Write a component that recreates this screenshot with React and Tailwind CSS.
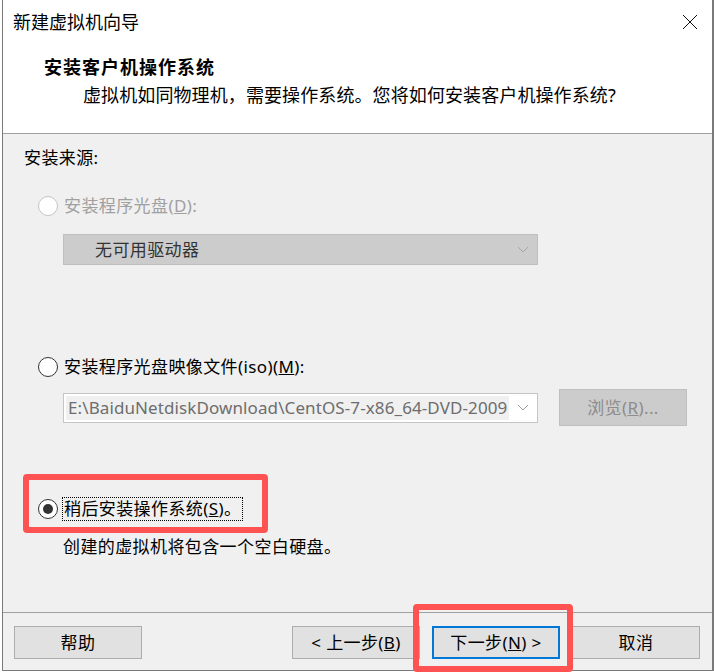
import React from 'react';

const font = "font-['Noto_Sans','Noto_Sans_CJK_SC',sans-serif]";

function Radio({ state }) {
    // state: 'disabled' | 'off' | 'on'
    const ring = state === 'disabled' ? 'border-[#c4c4c4]' : 'border-[#333333]';
    return (
        <span className={`w-[20px] h-[20px] rounded-full border bg-white flex items-center justify-center shrink-0 ${ring}`}>
            {state === 'on' && <span className="w-[10px] h-[10px] rounded-full bg-[#333333]" />}
        </span>
    );
}

function Chevron({ color }) {
    return (
        <svg width="12" height="7" viewBox="0 0 12 7" className="shrink-0">
            <polyline points="1,1 6,6 11,1" fill="none" stroke={color} strokeWidth="1" />
        </svg>
    );
}

function Btn({ children, primary }) {
    return (
        <div
            className={`w-[128px] h-[33px] flex items-center justify-center bg-[#e1e1e1] text-[17px] tracking-[0.4px] text-black ${
                primary ? 'border-2 border-[#0078d7]' : 'border border-[#adadad]'
            }`}
        >
            {children}
        </div>
    );
}

export default function App() {
    return (
        <div className={`relative w-[714px] h-[672px] bg-white overflow-hidden ${font}`}>
            <div className="ml-[2px] w-[712px] h-[671px] flex flex-col border-l border-r-2 border-b border-[#7a7a7a]">
                {/* header */}
                <div className="h-[134px] bg-white border-b border-[#a0a0a0] shrink-0">
                    <div className="h-[44px] flex items-center justify-between pl-[10px] pr-[14px]">
                        <span className="text-[18px] leading-[24px] text-black">新建虚拟机向导</span>
                        <svg width="16" height="16" viewBox="0 0 16 16">
                            <line x1="1" y1="1" x2="15" y2="15" stroke="#111" strokeWidth="1" />
                            <line x1="15" y1="1" x2="1" y2="15" stroke="#111" strokeWidth="1" />
                        </svg>
                    </div>
                    <div className="mt-[11px] pl-[41px] text-[18px] leading-[24px] font-bold text-black tracking-[1px]">
                        安装客户机操作系统
                    </div>
                    <div className="mt-[4px] pl-[80px] text-[18px] leading-[24px] text-black tracking-[0.1px]">
                        虚拟机如同物理机，需要操作系统。您将如何安装客户机操作系统?
                    </div>
                </div>

                {/* body */}
                <div className="flex-1 bg-[#f0f0f0] pl-[21px] pt-[12px] text-[17px] leading-[24px] tracking-[0.4px]">
                    <div className="text-black">安装来源:</div>

                    <div className="mt-[24px] ml-[14px] flex items-center gap-[6px] text-[#a0a0a0]">
                        <Radio state="disabled" />
                        <span>安装程序光盘(<span className="underline">D</span>):</span>
                    </div>
                    <div className="mt-[16px] ml-[39px] w-[475px] h-[31px] bg-[#cccccc] border border-[#bfbfbf] flex items-center justify-between pl-[31px] pr-[8px]">
                        <span className="text-[#333333]">无可用驱动器</span>
                        <Chevron color="#a6a6a6" />
                    </div>

                    <div className="mt-[90px] ml-[14px] flex items-center gap-[6px] text-black">
                        <Radio state="off" />
                        <span>安装程序光盘映像文件(iso)(<span className="underline">M</span>):</span>
                    </div>
                    <div className="mt-[10px] ml-[39px] h-[37px] flex items-center gap-[21px]">
                        <div className="w-[475px] h-[30px] bg-white border border-[#c6c6c6] flex items-center justify-between pl-[2px] pr-[8px]">
                            <span className="w-[443px] h-[24px] bg-[#f0f0f0] overflow-hidden whitespace-nowrap text-[#6d6d6d] pl-[2px] tracking-[0.1px]">
                                E:\BaiduNetdiskDownload\CentOS-7-x86_64-DVD-2009
                            </span>
                            <Chevron color="#a0a0a0" />
                        </div>
                        <div className="w-[128px] h-[37px] bg-[#cccccc] border border-[#bfbfbf] flex items-center justify-center text-[#8d8d8d]">
                            浏览(<span className="underline">R</span>)...
                        </div>
                    </div>

                    <div className="mt-[71px] ml-[14px] flex items-center gap-[4px] text-black">
                        <Radio state="on" />
                        <span className="border border-dotted border-black px-[1px] leading-[22px]">
                            稍后安装操作系统(<span className="underline">S</span>)。
                        </span>
                    </div>
                    <div className="mt-[14px] ml-[39px] text-black">创建的虚拟机将包含一个空白硬盘。</div>
                </div>

                {/* footer */}
                <div className="h-[58px] shrink-0 bg-[#f0f0f0] border-t border-[#a0a0a0] flex items-start pt-[13px] pl-[11px] pr-[12px]">
                    <Btn>帮助</Btn>
                    <div className="flex-1" />
                    <div className="flex gap-[12px]">
                        <Btn>&lt; 上一步(<span className="underline">B</span>)</Btn>
                        <Btn primary>下一步(<span className="underline">N</span>) &gt;</Btn>
                        <Btn>取消</Btn>
                    </div>
                </div>
            </div>

            {/* annotation boxes */}
            <div className="absolute left-[23px] top-[474px] w-[245px] h-[59px] border-[6px] border-[#ff5252] rounded-[4px] pointer-events-none" />
            <div className="absolute left-[413px] top-[604px] w-[160px] h-[68px] border-[6px] border-[#ff5252] rounded-[4px] pointer-events-none" />
        </div>
    );
}
